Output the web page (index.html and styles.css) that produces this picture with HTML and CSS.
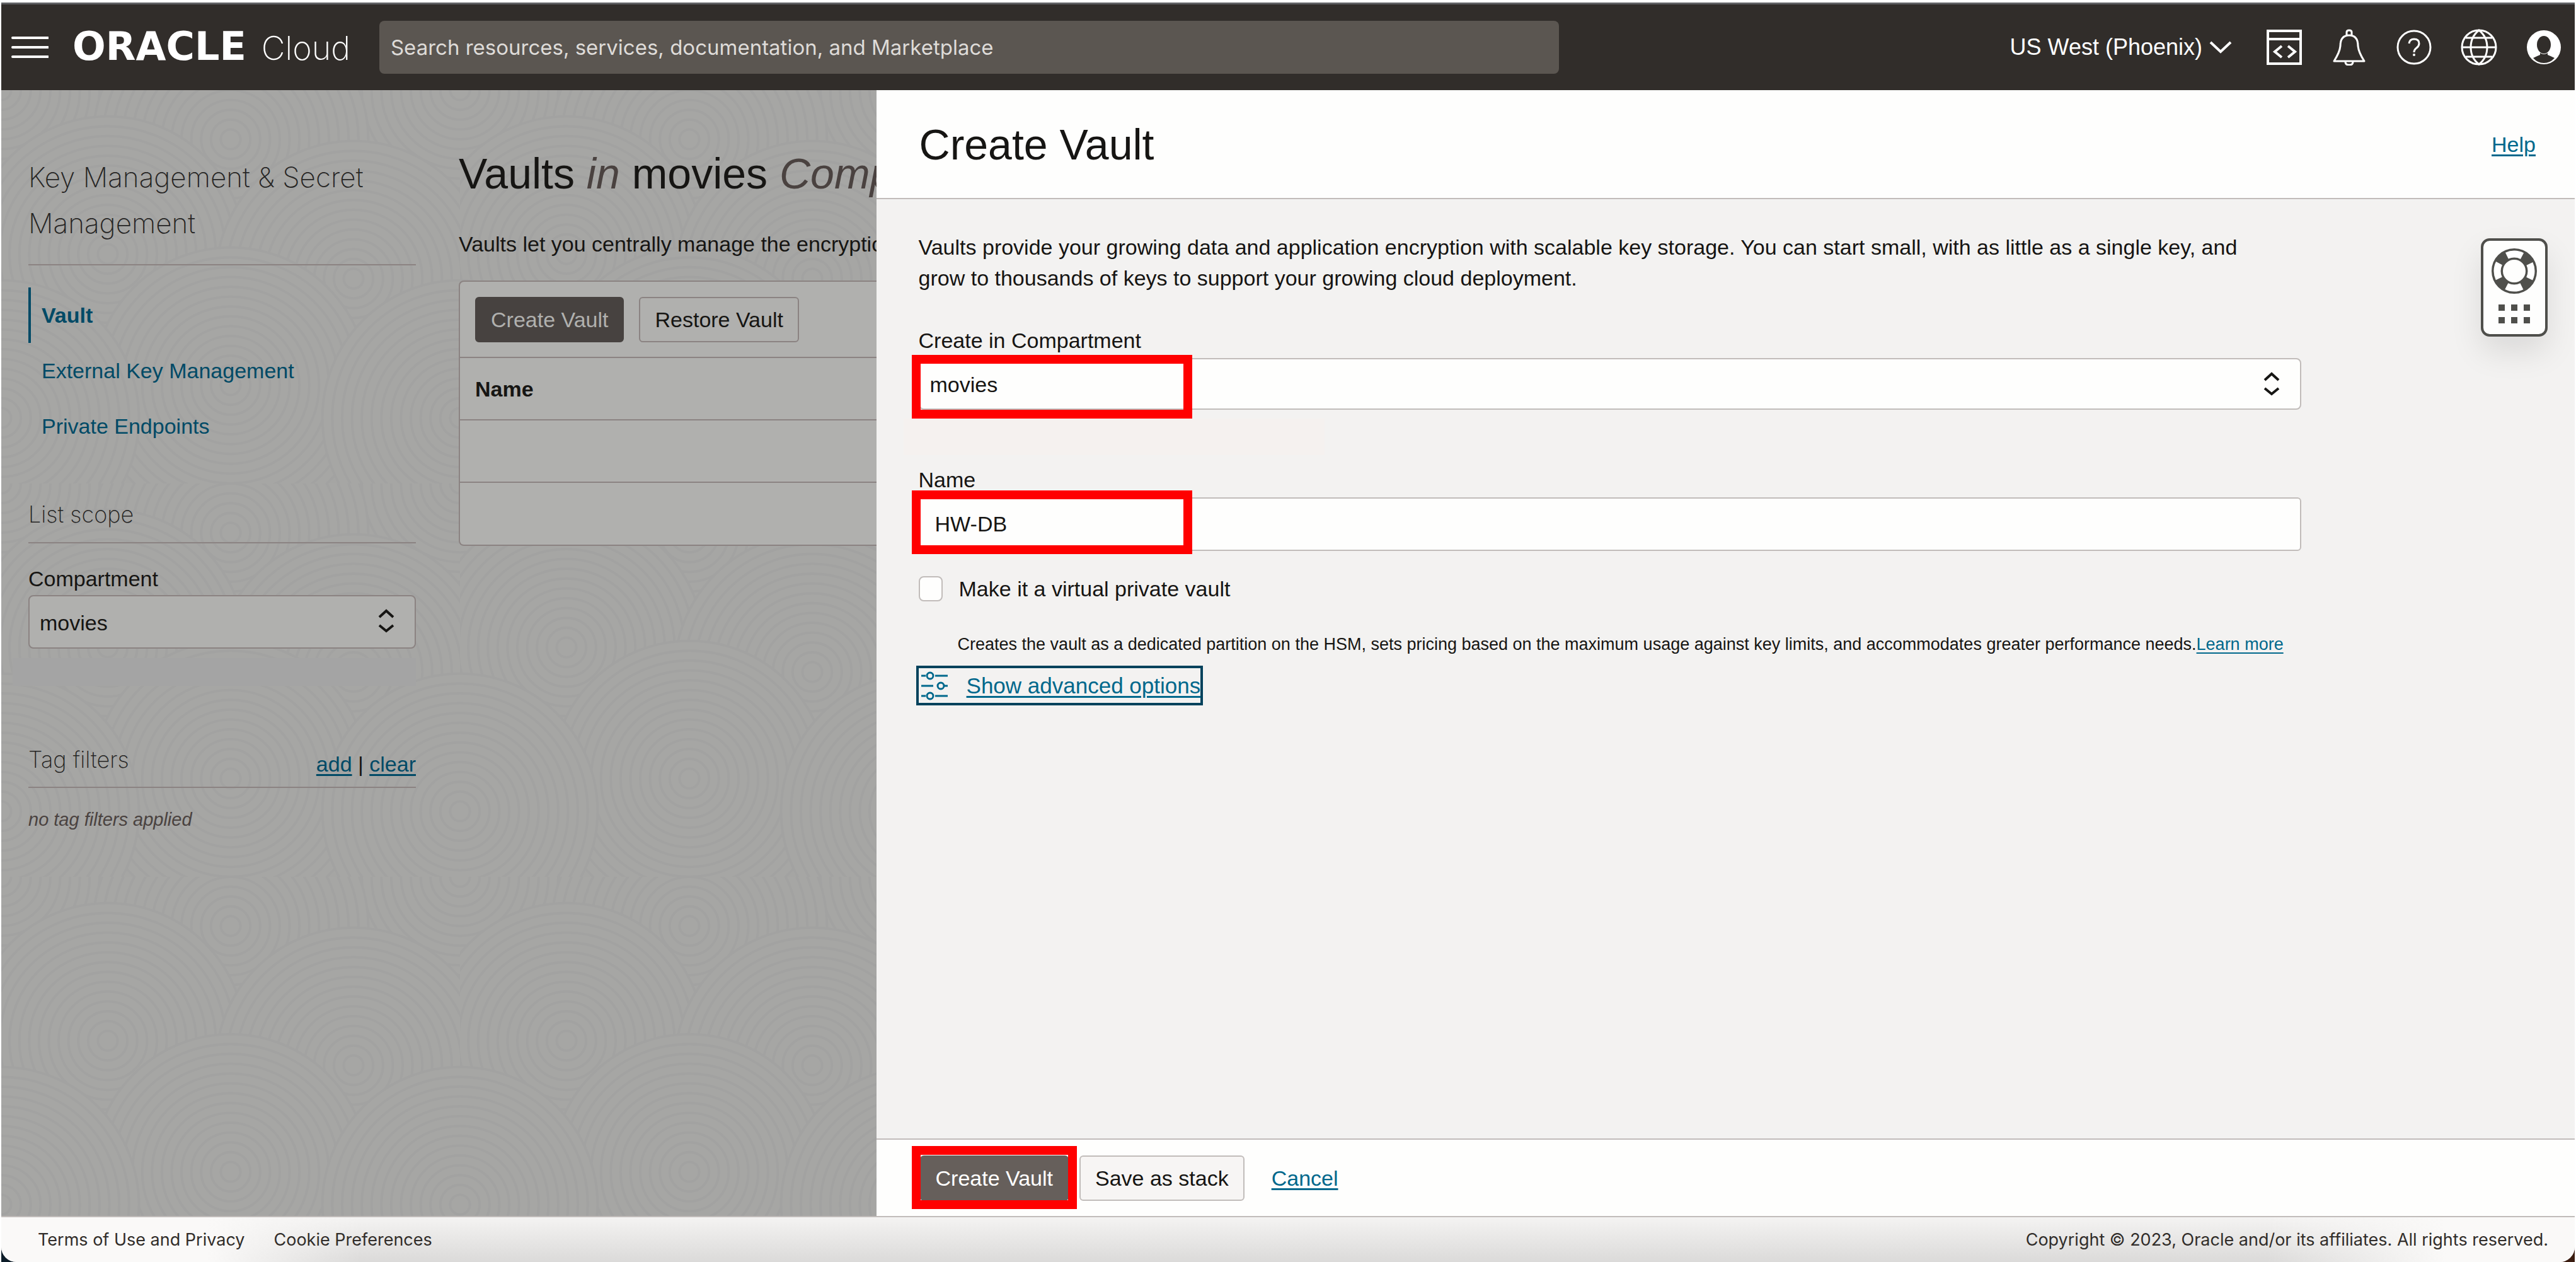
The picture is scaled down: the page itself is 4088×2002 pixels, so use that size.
FILE: index.html
```html
<!DOCTYPE html>
<html lang="en">
<head>
<meta charset="utf-8">
<title>Create Vault | Oracle Cloud</title>
<link rel="stylesheet" href="styles.css">
</head>
<body>
<div class="window">
  <header class="topbar">
    <button class="icon-button" type="button" aria-label="Open navigation menu">
      <svg width="60" height="36" viewBox="0 0 60 36"><path d="M3 3h56M3 18h56M3 33h56" stroke="#fff" stroke-width="4" stroke-linecap="round"/></svg>
    </button>
    <a class="brand" href="#"><span class="brand-name">ORACLE</span> <span class="brand-product">Cloud</span></a>
    <input class="search" type="search" aria-label="Search" placeholder="Search resources, services, documentation, and Marketplace">
    <div class="tools">
      <button class="region" type="button">US West (Phoenix)
        <svg width="38" height="22" viewBox="0 0 38 22"><path d="M3 3l16 15L35 3" fill="none" stroke="#fff" stroke-width="4"/></svg>
      </button>
      <button class="icon-button" type="button" aria-label="Developer tools">
        <svg width="58" height="58" viewBox="0 0 58 58" fill="none" stroke="#fff" stroke-width="4"><path d="M3 3h52v52H3zM3 16h52M25 27L14 36l11 9M35 27l11 9-11 9"/></svg>
      </button>
      <button class="icon-button" type="button" aria-label="Announcements">
        <svg width="58" height="58" viewBox="0 0 58 58" fill="none" stroke="#fff" stroke-width="3" stroke-linejoin="round"><path d="M25 10V5q0-3 4-3t4 3v5M5 51q9-14 10-24 0-17 14-17t14 17q1 10 10 24zM23 52q0 5 6 5t6-5"/></svg>
      </button>
      <button class="icon-button" type="button" aria-label="Help">
        <svg width="58" height="58" viewBox="0 0 58 58" fill="none" stroke="#fff" stroke-width="3"><circle cx="29" cy="29" r="26"/><path d="M21 23q1-7 8-7 8 0 8 7 0 4-4 7-4 3-4 7" stroke-width="3"/><circle cx="29" cy="41" r="2" fill="#fff" stroke="none"/></svg>
      </button>
      <button class="icon-button" type="button" aria-label="Language">
        <svg width="58" height="58" viewBox="0 0 58 58" fill="none" stroke="#fff" stroke-width="3"><circle cx="29" cy="29" r="27"/><path d="M29 2q-13 10-13 27t13 27q13-10 13-27T29 2zM8 14h42M2 29h54M8 44h42"/></svg>
      </button>
      <button class="icon-button" type="button" aria-label="Profile">
        <svg width="58" height="58" viewBox="0 0 58 58"><circle cx="29" cy="29" r="27" fill="#fff"/><ellipse cx="29" cy="25" rx="11" ry="14" fill="#312d2a"/><path d="M12 46q6-3 11-5v-3q6 4 12 0v3q5 2 11 5-7 8-17 8t-17-8z" fill="#312d2a"/></svg>
      </button>
    </div>
  </header>

  <main class="main">
    <div class="workspace">
      <svg class="texture" width="100%" height="100%" aria-hidden="true">
        <defs>
          <g id="rings" fill="none" stroke="#a2a2a1" stroke-width="3">
            <circle r="168" fill="#a6a6a4"/><circle r="156"/><circle r="144"/><circle r="132"/><circle r="120"/><circle r="108"/><circle r="96"/><circle r="84"/><circle r="72"/><circle r="60"/><circle r="48"/><circle r="36"/><circle r="24"/><circle r="12"/>
          </g>
          <pattern id="waves" width="560" height="480" patternUnits="userSpaceOnUse" patternTransform="scale(1.3)">
            <use href="#rings" x="0" y="0"/><use href="#rings" x="560" y="0"/><use href="#rings" x="280" y="60"/>
            <use href="#rings" x="130" y="200"/><use href="#rings" x="430" y="230"/>
            <use href="#rings" x="280" y="360"/><use href="#rings" x="0" y="400"/><use href="#rings" x="560" y="400"/>
          </pattern>
        </defs>
        <rect width="100%" height="100%" fill="url(#waves)"/>
      </svg>

      <aside class="sidebar">
        <h2 class="service-title">Key Management &amp; Secret Management</h2>
        <nav class="service-nav">
          <a class="nav-link is-active" href="#">Vault</a>
          <a class="nav-link" href="#">External Key Management</a>
          <a class="nav-link" href="#">Private Endpoints</a>
        </nav>
        <h3 class="side-heading scope-heading">List scope</h3>
        <label class="side-label" for="scope">Compartment</label>
        <div class="select-box">
          <select class="select side-select" id="scope"><option>movies</option></select>
          <svg class="select-arrows" width="26" height="38" viewBox="0 0 26 38"><path d="M2 13L13 3l11 10M2 26l11 9 11-9" fill="none" stroke="#161513" stroke-width="4"/></svg>
        </div>
        <div class="loading-strip"></div>
        <div class="tag-row">
          <h3 class="side-heading">Tag filters</h3>
          <span><a href="#">add</a> | <a href="#">clear</a></span>
        </div>
        <p class="tag-note">no tag filters applied</p>
      </aside>

      <section class="listing">
        <h1 class="page-title">Vaults <em>in</em> movies <em>Compartment</em></h1>
        <p class="intro">Vaults let you centrally manage the encryption</p>
        <div class="card">
          <div class="card-tools">
            <button class="button primary dimmed" type="button">Create Vault</button>
            <button class="button dimmed" type="button">Restore Vault</button>
          </div>
          <table class="vaults">
            <thead><tr><th scope="col">Name</th></tr></thead>
            <tbody><tr><td></td></tr><tr><td></td></tr></tbody>
          </table>
        </div>
      </section>
    </div>

    <section class="panel">
      <header class="panel-head">
        <h2 class="panel-title">Create Vault</h2>
        <a href="#">Help</a>
      </header>
      <form class="panel-body" id="vault-form">
        <p class="lead">Vaults provide your growing data and application encryption with scalable key storage. You can start small, with as little as a single key, and grow to thousands of keys to support your growing cloud deployment.</p>
        <label class="field-label" for="compartment">Create in Compartment</label>
        <div class="select-box marked">
          <select class="select field-select" id="compartment"><option>movies</option></select>
          <svg class="select-arrows" width="26" height="38" viewBox="0 0 26 38"><path d="M2 13L13 3l11 10M2 26l11 9 11-9" fill="none" stroke="#161513" stroke-width="4"/></svg>
          <span class="marker marker-select"></span>
        </div>
        <div class="status-strip"></div>
        <label class="field-label" for="name">Name</label>
        <div class="marked">
          <input class="text-input" id="name" type="text" value="HW-DB">
          <span class="marker marker-name"></span>
        </div>
        <label class="check-row"><input class="check" type="checkbox">Make it a virtual private vault</label>
        <p class="hint">Creates the vault as a dedicated partition on the HSM, sets pricing based on the maximum usage against key limits, and accommodates greater performance needs.<a href="#">Learn more</a></p>
        <a class="advanced" href="#">
          <svg width="46" height="46" viewBox="0 0 46 46" fill="none" stroke="#00688c" stroke-width="3"><path d="M0 7h7M22 7h20M0 23h19M36 23h6M0 39h7M22 39h20"/><circle cx="14" cy="7" r="5"/><circle cx="31" cy="23" r="5"/><circle cx="14" cy="39" r="5"/></svg>
          <span>Show advanced options</span>
        </a>
      </form>
      <footer class="panel-foot">
        <div class="marked">
          <button class="button primary" type="submit" form="vault-form">Create Vault</button>
          <span class="marker marker-submit"></span>
        </div>
        <button class="button" type="button">Save as stack</button>
        <a class="cancel" href="#">Cancel</a>
      </footer>
      <button class="support" type="button" aria-label="Support">
        <svg width="76" height="134" viewBox="0 0 76 134">
          <circle cx="38" cy="41" r="27" fill="none" stroke="#4f4f4b" stroke-width="18"/>
          <circle cx="38" cy="41" r="27" fill="none" stroke="#fff" stroke-width="11" stroke-dasharray="25 17.41" stroke-dashoffset="12.5"/>
          <path d="M13 94h10v10H13zM33 94h10v10H33zM53 94h10v10H53zM13 114h10v10H13zM33 114h10v10H33zM53 114h10v10H53z" fill="#4f4f4b"/>
        </svg>
      </button>
    </section>
  </main>

  <div class="desktop-edge">
    <footer class="footer">
      <a href="#">Terms of Use and Privacy</a>
      <a href="#">Cookie Preferences</a>
      <small class="copyright">Copyright © 2023, Oracle and/or its affiliates. All rights reserved.</small>
    </footer>
  </div>
</div>
</body>
</html>
```
FILE: styles.css
```css
* { box-sizing: border-box; }

body {
  margin: 0;
  background: #fff;
  color: #161513;
  font: 34px/40px "Liberation Sans", Arial, sans-serif;
}

h1, h2, h3, p { margin: 0; font-weight: 400; }
a { color: #00688c; text-decoration-thickness: 3px; text-underline-offset: 4px; }
button, input, select { font: inherit; color: inherit; margin: 0; }
svg { display: block; }

.window {
  display: flex;
  flex-direction: column;
  min-height: 100vh;
  padding: 4px 2px 0;
}

/* Top bar */
.topbar {
  display: flex;
  align-items: center;
  min-height: 139px;
  padding: 0 20px 0 15px;
  border-top: 3px solid #606164;
  background: #312d2a;
  color: #fff;
}
.icon-button { padding: 0; border: 0; background: none; }
.brand {
  display: flex;
  align-items: baseline;
  gap: 24px;
  min-width: 436px;
  margin-left: 38px;
  color: #fff;
  text-decoration: none;
  line-height: 64px;
}
.brand-name { font-family: "DejaVu Sans", sans-serif; font-size: 62px; font-weight: 700; }
.brand-product { font-family: Inter, sans-serif; font-size: 52px; font-weight: 200; }
.search {
  flex: 1;
  height: 84px;
  margin-left: 46px;
  padding: 0 18px;
  border: 0;
  border-radius: 8px;
  background: #5b5651;
  font-family: Inter, sans-serif;
  font-size: 33px;
}
.search::placeholder { color: #dedbd8; opacity: 1; }
.tools { display: flex; align-items: center; gap: 45px; margin-left: 716px; }
.region {
  display: flex;
  align-items: center;
  gap: 10px;
  margin-right: 8px;
  padding: 0;
  border: 0;
  background: none;
  font-size: 36px;
}

/* Work area behind the panel */
.main { display: flex; flex: 1; }
.workspace {
  position: relative;
  display: flex;
  flex: 0 0 34%;
  gap: 68px;
  overflow: hidden;
  padding-left: 43px;
  background: #a5a5a3;
}
.workspace a { color: #004a66; }
.texture { position: absolute; inset: 0; }
.sidebar, .listing { position: relative; }
.sidebar { flex: 0 0 615px; padding-top: 102px; }
.service-title {
  padding-bottom: 28px;
  border-bottom: 2px solid #8b8382;
  color: #262524;
  font-family: Inter, sans-serif;
  font-size: 44px;
  font-weight: 200;
  line-height: 73px;
}
.service-nav { margin-top: 35px; }
.nav-link {
  display: block;
  padding-left: 17px;
  border-left: 4px solid transparent;
  line-height: 88px;
  text-decoration: none;
}
.nav-link.is-active { border-color: #004a66; font-weight: 700; }
.side-heading {
  color: #262524;
  font-family: Inter, sans-serif;
  font-size: 36px;
  font-weight: 200;
  line-height: 44px;
}
.scope-heading {
  margin-top: 74px;
  padding-bottom: 22px;
  border-bottom: 2px solid #8b8382;
}
.side-label { display: block; margin: 36px 0 6px; }

.select-box { position: relative; }
.select {
  display: block;
  width: 100%;
  padding: 2px 16px 0;
  border: 2px solid #c1bcba;
  border-radius: 8px;
  background: #fefefd;
  appearance: none;
}
.side-select { height: 85px; border-color: #8b8382; background: #b0b0ae; }
.field-select { height: 82px; }
.select-arrows { position: absolute; top: 22px; right: 34px; pointer-events: none; }
.loading-strip { height: 44px; margin: 15px 0 0 -25px; background: #a4a4a4; }
.tag-row {
  display: flex;
  align-items: flex-end;
  justify-content: space-between;
  margin-top: 95px;
  padding-bottom: 16px;
  border-bottom: 2px solid #8b8382;
}
.tag-row .side-heading { padding-bottom: 5px; }
.tag-note { margin-top: 32px; color: #4a4240; font-size: 29px; font-style: italic; line-height: 36px; }

.listing { flex: 1; min-width: 0; overflow: hidden; padding-top: 92px; white-space: nowrap; }
.page-title { font-size: 68px; line-height: 80px; }
.page-title em { color: #4a4240; }
.intro { margin: 52px 0 38px; }
.card {
  border: solid #8b8382;
  border-width: 2px 0 2px 2px;
  border-radius: 8px 0 0 8px;
  background: #b0b0ae;
}
.card-tools { display: flex; gap: 24px; padding: 24px 24px 23px; }
.vaults { width: 100%; border-collapse: collapse; }
.vaults th, .vaults td {
  height: 99px;
  padding: 0 24px;
  border-top: 2px solid #8b8382;
  text-align: left;
}

.button {
  height: 72px;
  padding: 0 23px;
  border: 2px solid #c1bcba;
  border-radius: 6px;
  background: #f7f5f4;
}
.button.primary { border-color: #665f5b; background: #665f5b; color: #fff; }
.button.dimmed { border-color: #8b8382; background: #b0b0ae; }
.button.primary.dimmed { border-color: #474240; background: #474240; color: #b0b0ae; }

/* Slide-out panel */
.panel {
  position: relative;
  display: flex;
  flex: 1;
  flex-direction: column;
  background: #fefefd;
}
.panel-head {
  display: flex;
  align-items: center;
  justify-content: space-between;
  min-height: 173px;
  padding: 0 62px 0 68px;
  border-bottom: 2px solid #c1bcba;
}
.panel-title { font-size: 68px; line-height: 80px; }
.panel-body {
  flex: 1;
  padding: 52px 434px 0 67px;
  background: #f3f2f1;
}
.lead { margin-bottom: 54px; padding-right: 60px; line-height: 49px; }
.field-label { display: block; margin-bottom: 8px; }
.status-strip { width: 668px; height: 58px; margin: 14px 0 19px -24px; background: #f5f1ef; }
.text-input {
  display: block;
  width: 100%;
  height: 85px;
  padding: 0 24px;
  border: 2px solid #c1bcba;
  border-radius: 6px;
  background: #fefefd;
}
.check-row { display: flex; align-items: center; gap: 26px; margin-top: 40px; }
.check {
  width: 38px;
  height: 40px;
  border: 2px solid #c1bcba;
  border-radius: 8px;
  background: #fefefd;
  appearance: none;
}
.hint { margin: 50px 0 16px 62px; font-size: 27px; line-height: 36px; white-space: nowrap; }
.hint a { text-decoration-thickness: 2px; }
.advanced {
  display: inline-flex;
  align-items: center;
  gap: 26px;
  height: 63px;
  margin-left: -4px;
  padding: 0 0 0 4px;
  border: 4px solid #00425c;
  font-size: 35px;
}

/* Red call-out frames */
.marked { position: relative; }
.marker { position: absolute; border: 14px solid #f00; pointer-events: none; }
.marker-select { top: -5px; left: -11px; width: 445px; height: 101px; }
.marker-name { top: -11px; left: -11px; width: 445px; height: 101px; }
.marker-submit { top: -15px; left: -13px; width: 262px; height: 100px; }

.panel-foot {
  display: flex;
  align-items: center;
  gap: 17px;
  min-height: 123px;
  padding: 0 68px 0 69px;
  border-top: 2px solid #c1bcba;
}
.cancel { margin-left: 26px; }

.support {
  position: absolute;
  top: 235px;
  right: 43px;
  width: 106px;
  height: 156px;
  padding: 7px 11px;
  border: 4px solid #4f4f4b;
  border-radius: 14px;
  background: #fefefd;
  box-shadow: 0 24px 50px rgba(0, 0, 0, .1);
}

/* Page footer */
.desktop-edge { background: linear-gradient(90deg, #0c1c28 50%, #3a1c10 50%); }
.footer {
  display: flex;
  align-items: center;
  gap: 46px;
  min-height: 73px;
  padding: 0 42px 0 58px;
  border-top: 2px solid #c1bcba;
  border-radius: 0 0 24px 24px;
  background:
    linear-gradient(90deg, #faf9f8 8%, transparent 14%, transparent 88%, #faf9f8 95%),
    linear-gradient(#f4f3f2, #dbdad9);
  font: 27px/32px Inter, sans-serif;
}
.footer a { color: #312d2a; text-decoration: none; }
.copyright { margin-left: auto; color: #312d2a; font-size: 27px; }
```
